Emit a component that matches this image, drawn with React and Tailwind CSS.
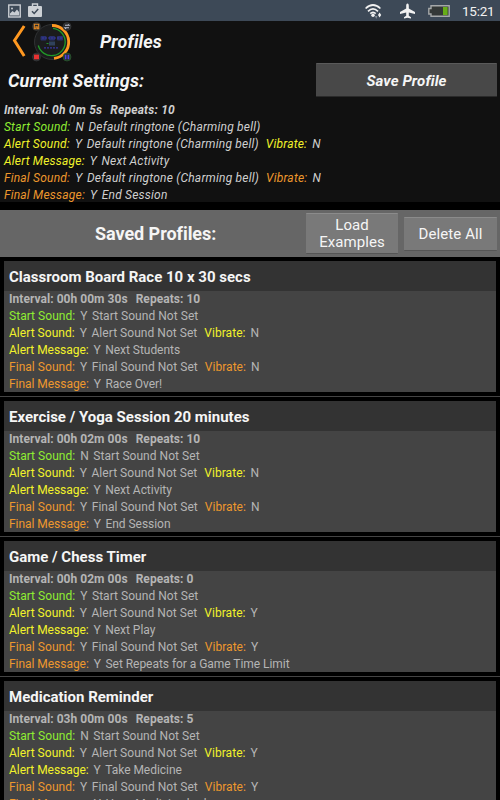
const colors = {
  green: "text-[#8fec32]",
  yellow: "text-[#f2f22a]",
  orange: "text-[#ee982d]",
};

function Row({ color, label, flag, text, vibrate, tight }) {
  return (
    <div className={`flex h-[17px] items-center whitespace-pre ${tight ? "tracking-[-0.04px]" : ""}`}>
      <span className={colors[color]}>{label}:</span>
      <span className="ml-[5px]">{flag}</span>
      <span className="ml-[4.5px]">{text}</span>
      {vibrate && (
        <>
          <span className={`${colors[color]} ml-[7px]`}>Vibrate:</span>
          <span className="ml-[5px]">{vibrate}</span>
        </>
      )}
    </div>
  );
}

function Rows({ p, tight }) {
  return (
    <>
      <div className="flex h-[17px] items-center font-bold">
        <span>Interval: {p.interval}</span>
        <span className="ml-[8px]">Repeats: {p.repeats}</span>
      </div>
      <Row color="green" label="Start Sound" flag={p.start} text={p.startText} />
      <Row color="yellow" label="Alert Sound" flag="Y" text={p.alertText} vibrate={p.vibrate} />
      <Row color="yellow" label="Alert Message" flag="Y" text={p.alertMsg} tight={tight} />
      <Row color="orange" label="Final Sound" flag="Y" text={p.finalText} vibrate={p.vibrate} />
      <Row color="orange" label="Final Message" flag="Y" text={p.finalMsg} tight={tight} />
    </>
  );
}

const ring = "Default ringtone (Charming bell)";
const current = { interval: "0h 0m 5s", repeats: 10, start: "N", startText: ring, alertText: ring, finalText: ring, vibrate: "N", alertMsg: "Next Activity", finalMsg: "End Session" };
const base = { startText: "Start Sound Not Set", alertText: "Alert Sound Not Set", finalText: "Final Sound Not Set" };
const profiles = [
  { ...base, name: "Classroom Board Race 10 x 30 secs", interval: "00h 00m 30s", repeats: 10, start: "Y", vibrate: "N", alertMsg: "Next Students", finalMsg: "Race Over!" },
  { ...base, name: "Exercise / Yoga Session 20 minutes", interval: "00h 02m 00s", repeats: 10, start: "N", vibrate: "N", alertMsg: "Next Activity", finalMsg: "End Session" },
  { ...base, name: "Game / Chess Timer", interval: "00h 02m 00s", repeats: 0, start: "Y", vibrate: "Y", alertMsg: "Next Play", finalMsg: "Set Repeats for a Game Time Limit" },
  { ...base, name: "Medication Reminder", interval: "03h 00m 00s", repeats: 5, start: "N", vibrate: "Y", alertMsg: "Take Medicine", finalMsg: "Have Medicine had" },
];

function StatusBar() {
  return (
    <div className="flex h-[21px] shrink-0 items-center bg-[#3d4957] text-[#f2f2f2]">
      <svg className="ml-[8px]" width="13" height="14" viewBox="0 0 13 14">
        <rect x="0.75" y="1" width="11.5" height="12" fill="#3d4957" stroke="#c9cdd2" strokeWidth="1.4" />
        <path d="M2 11.5V9.5L4.5 7L6.5 8.5L9 5.5L11 8V11.5Z" fill="#c9cdd2" />
        <circle cx="4" cy="4.5" r="1" fill="#c9cdd2" />
      </svg>
      <svg className="ml-[7px] -mt-[2px]" width="14" height="14" viewBox="0 0 14 14">
        <path d="M4.5 3V1H9.5V3" fill="none" stroke="#cdd1d5" strokeWidth="1.4" />
        <rect x="0" y="3" width="14" height="11" rx="1" fill="#cdd1d5" />
        <path d="M4 8.3L6.2 10.5L10.2 6" fill="none" stroke="#3d4957" strokeWidth="1.5" />
      </svg>
      <svg className="ml-[323px]" width="17" height="16" viewBox="0 0 17 16" fill="none" stroke="#f2f2f2" strokeWidth="1.7">
        <path d="M0.6 5.5Q8 -1.5 15.4 5.5M3 8.3Q8 3.3 13 8.3M5.3 10.7Q8 8 10.7 10.7" />
        <circle cx="8" cy="12.3" r="1.7" fill="#f2f2f2" stroke="none" />
        <path d="M10 13h2.4L11.2 16z" fill="#87909a" stroke="none" />
        <path d="M13 12h3.2L14.6 9.5zM13 12h3.2L14.6 14.5z" fill="#f2f2f2" stroke="none" />
      </svg>
      <svg className="ml-[18px]" width="15" height="16" viewBox="0 0 15 16" fill="#f2f2f2">
        <path d="M7.5 0.5C8.5 .5 8.8 1.5 8.8 3V5.5L15 9V11L8.8 9.5V12.7L11 14.3V15.5L7.5 14.8L4 15.5V14.3L6.2 12.7V9.5L0 11V9L6.2 5.5V3C6.2 1.5 6.5 .5 7.5 .5Z" />
      </svg>
      <svg className="ml-[13px]" width="22" height="12" viewBox="0 0 22 12">
        <path d="M3 .8H21.2V11.2H3V9H.8V3.5H3Z" fill="#343837" stroke="#a5a8a9" strokeWidth="1.4" />
        <rect x="15" y="2" width="4.6" height="8" fill="#66ad16" />
      </svg>
      <span className="ml-[12px] mt-[2px] text-[13.5px] leading-none tracking-[-0.25px]">15:21</span>
    </div>
  );
}

function TimerLogo() {
  return (
    <svg className="-mt-px ml-[6px]" width="40" height="40" viewBox="32 21 40 40" fill="none">
      <circle cx="52" cy="41" r="17.5" fill="#1b1c1d" stroke="#303234" />
      <path d="M52 24.5A16.5 16.5 0 0 1 54 57.4" stroke="#ff9820" strokeWidth="2.8" />
      <path d="M53 27.3A13.7 13.7 0 1 1 38.3 44.5" stroke="#219a28" strokeWidth="1.3" />
      <g fill="#28306d">
        <rect x="40.5" y="35" width="6" height="4.5" rx="1" />
        <rect x="49" y="35" width="6" height="4.5" rx="1" />
        <rect x="57" y="35" width="6" height="4.5" rx="1" />
      </g>
      <path d="M42 37h21M44 46.8h15" stroke="#3937a0" strokeWidth="1.2" strokeDasharray="2 1" />
      <rect x="49" y="40.5" width="6" height="4" fill="#30425c" />
      <path d="M46.5 42.5h2" stroke="#20902c" />
      <g fill="#292b2e" stroke="#3c3f42" strokeWidth=".6">
        <circle cx="36.5" cy="25.5" r="4" />
        <circle cx="67" cy="25.5" r="4" />
        <circle cx="36.5" cy="56" r="4" />
        <circle cx="67" cy="56" r="4" stroke="#276f2d" />
      </g>
      <path d="M34.3 27.7v-4.4h4.4v4.4h-1.4v-2h-1.4v2z" stroke="#e58a23" strokeWidth="1.1" />
      <path d="M65 24.3h4l-1-1M69 26.8h-4l1 1" stroke="#b9bfd0" strokeWidth="1.1" />
      <rect x="34" y="53.6" width="5" height="4.7" fill="#e83232" />
      <path d="M65.6 53.8v4.4M68.4 53.8v4.4" stroke="#4a44dc" strokeWidth="1.6" />
    </svg>
  );
}

export default function App() {
  return (
    <div className="flex h-[800px] w-[500px] flex-col overflow-hidden bg-black font-['Roboto',sans-serif] text-[12px] leading-[17px]">
      <StatusBar />
      <header className="h-[181px] shrink-0 bg-[#111111] italic tracking-[0.2px] text-[#cfcfcf]">
        <div className="flex h-[42px] items-center">
          <svg className="-mt-[3px] ml-[12px]" width="14" height="32" viewBox="0 0 14 32">
            <path d="M12.2 1L2.5 15.5L12.2 31" fill="none" stroke="#ff9820" strokeWidth="3" />
          </svg>
          <TimerLogo />
          <h1 className="-mt-[2px] ml-[28px] text-[18px] font-bold tracking-[0.1px] text-[#f5f5f5]">Profiles</h1>
        </div>
        <div className="flex h-[39px] items-start justify-between pl-[8px] pr-[3px]">
          <h2 className="mt-[9px] text-[18px] font-bold tracking-[0.15px] text-[#f5f5f5]">Current Settings:</h2>
          <button className="h-[34px] w-[181px] rounded-[1px] border-b border-t border-b-[#2a2a2a] border-t-[#5a5a5a] bg-[#484848] pt-[2px] text-[15px] font-bold italic tracking-[0.1px] text-[#f5f5f5]">Save Profile</button>
        </div>
        <div className="pl-[4px] tracking-[0.21px]">
          <Rows p={current} />
        </div>
      </header>
      <div className="mt-[8px] flex h-[47px] shrink-0 items-center bg-[#666666] pl-[95px] pr-[3px] text-[#f5f5f5]">
        <h2 className="w-[211px] text-[18px] font-bold tracking-[-0.05px]">Saved Profiles:</h2>
        <button className="h-[41px] w-[92px] rounded-[1px] border-b border-t border-b-[#555] border-t-[#8b8b8b] bg-[#797979] pt-px text-[15px] leading-[17px] tracking-[0.05px]">Load<br />Examples</button>
        <button className="ml-auto h-[34px] w-[93px] rounded-[1px] border-b border-t border-b-[#555] border-t-[#8b8b8b] bg-[#797979] pt-px text-[15px] tracking-[0.1px]">Delete All</button>
      </div>
      <main className="flex flex-col">
        {profiles.map((p) => (
          <div key={p.name} className="h-[140px] shrink-0 border-b border-[#444] px-[4px] pt-[4px]">
            <section className="h-[131px] bg-[#444444] text-[#b5b5b5]">
              <h3 className="flex h-[30px] items-center bg-[#333333] pl-[5px] pt-[3px] text-[15px] font-bold text-[#f5f5f5]">{p.name}</h3>
              <div className="pl-[5px] tracking-[0.04px]">
                <Rows p={p} tight />
              </div>
            </section>
          </div>
        ))}
      </main>
    </div>
  );
}
